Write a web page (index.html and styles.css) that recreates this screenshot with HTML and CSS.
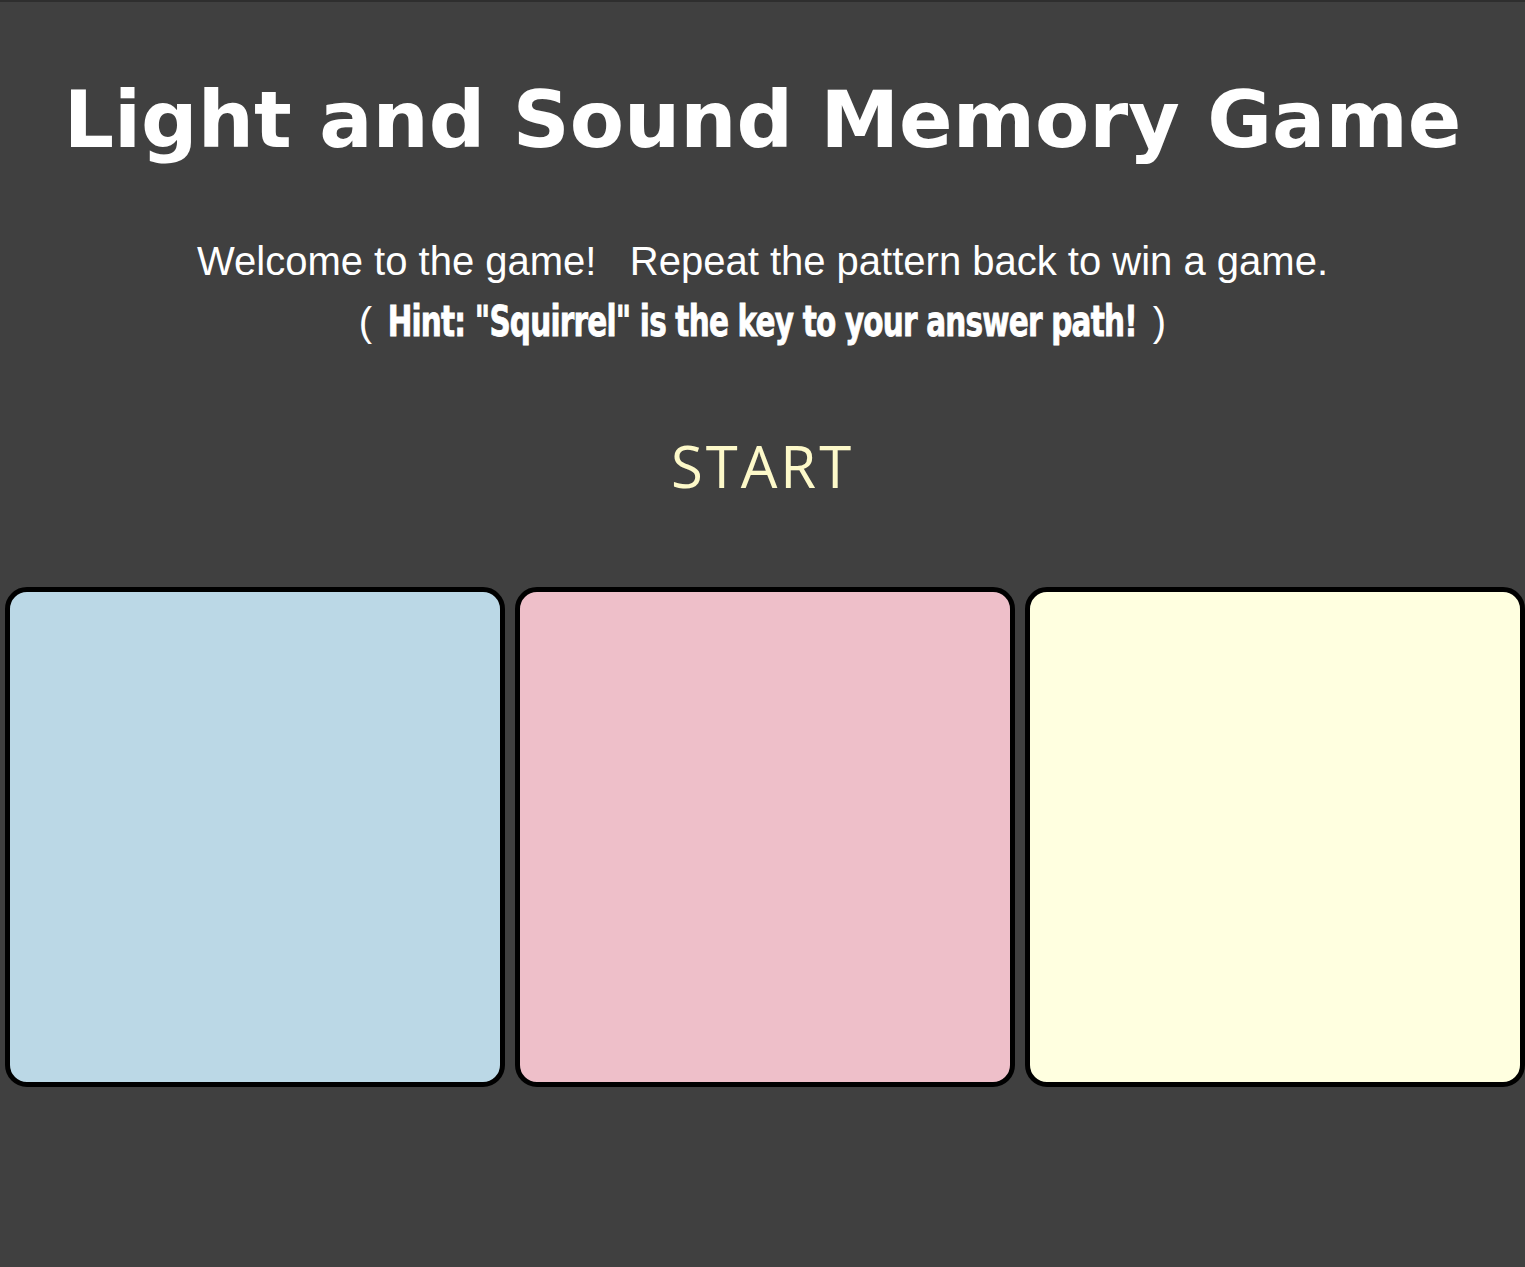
FILE: index.html
```html
<!DOCTYPE html>
<html>
<head>
<meta charset="utf-8">
<title>Light and Sound Memory Game</title>
<link rel="stylesheet" href="styles.css">
</head>
<body>
<h1 class="title">Light and Sound Memory Game</h1>
<p class="intro">Welcome to the game! &nbsp; Repeat the pattern back to win a game.</p>
<p class="hint-line">( <span class="hint">Hint: "Squirrel" is the key to your answer path!</span> )</p>
<div class="controls">
  <button class="start-btn">START</button>
</div>
<div class="game-area">
  <button class="pad pad-blue"></button>
  <button class="pad pad-pink"></button>
  <button class="pad pad-yellow"></button>
</div>
</body>
</html>
```
FILE: styles.css
```css
html, body {
  margin: 0;
  padding: 0;
}
body {
  background: #404040;
  border-top: 2px solid #2e2e2e;
  color: #ffffff;
  font-family: "Liberation Sans", Arial, sans-serif;
  min-height: 1265px;
}
.title {
  font-family: "DejaVu Sans", Verdana, sans-serif;
  font-weight: bold;
  font-size: 79px;
  text-align: center;
  margin: 0;
  padding-top: 70px;
  line-height: 96px;
}
.intro {
  text-align: center;
  font-size: 40px;
  margin: 0;
  padding-top: 69px;
  line-height: 48px;
}
.hint-line {
  text-align: center;
  font-size: 40px;
  margin: 0;
  padding-top: 13px;
  line-height: 48px;
}
.hint {
  display: inline-block;
  font-family: "DejaVu Sans Condensed", "DejaVu Sans", sans-serif;
  font-weight: bold;
  font-size: 42px;
  letter-spacing: -1px;
  -webkit-text-stroke: 0.8px #ffffff;
  transform: scaleX(0.78);
  margin: 0 -101px;
}
.controls {
  display: flex;
  justify-content: center;
  padding-top: 85px;
}
.start-btn {
  background: none;
  border: none;
  color: #fdf9c9;
  font-family: "Open Sans", "Lato", sans-serif;
  font-size: 58px;
  letter-spacing: 3px;
  line-height: 70px;
  padding: 0;
  cursor: pointer;
}
.game-area {
  display: flex;
  gap: 10px;
  padding-left: 5px;
  padding-top: 86px;
}
.pad {
  width: 500px;
  height: 500px;
  border: 5px solid #000;
  border-radius: 22px;
  padding: 0;
  flex: none;
  box-sizing: border-box;
}
.pad-blue { background: #bbd8e6; }
.pad-pink { background: #eebfc9; }
.pad-yellow { background: #ffffe0; }
```
